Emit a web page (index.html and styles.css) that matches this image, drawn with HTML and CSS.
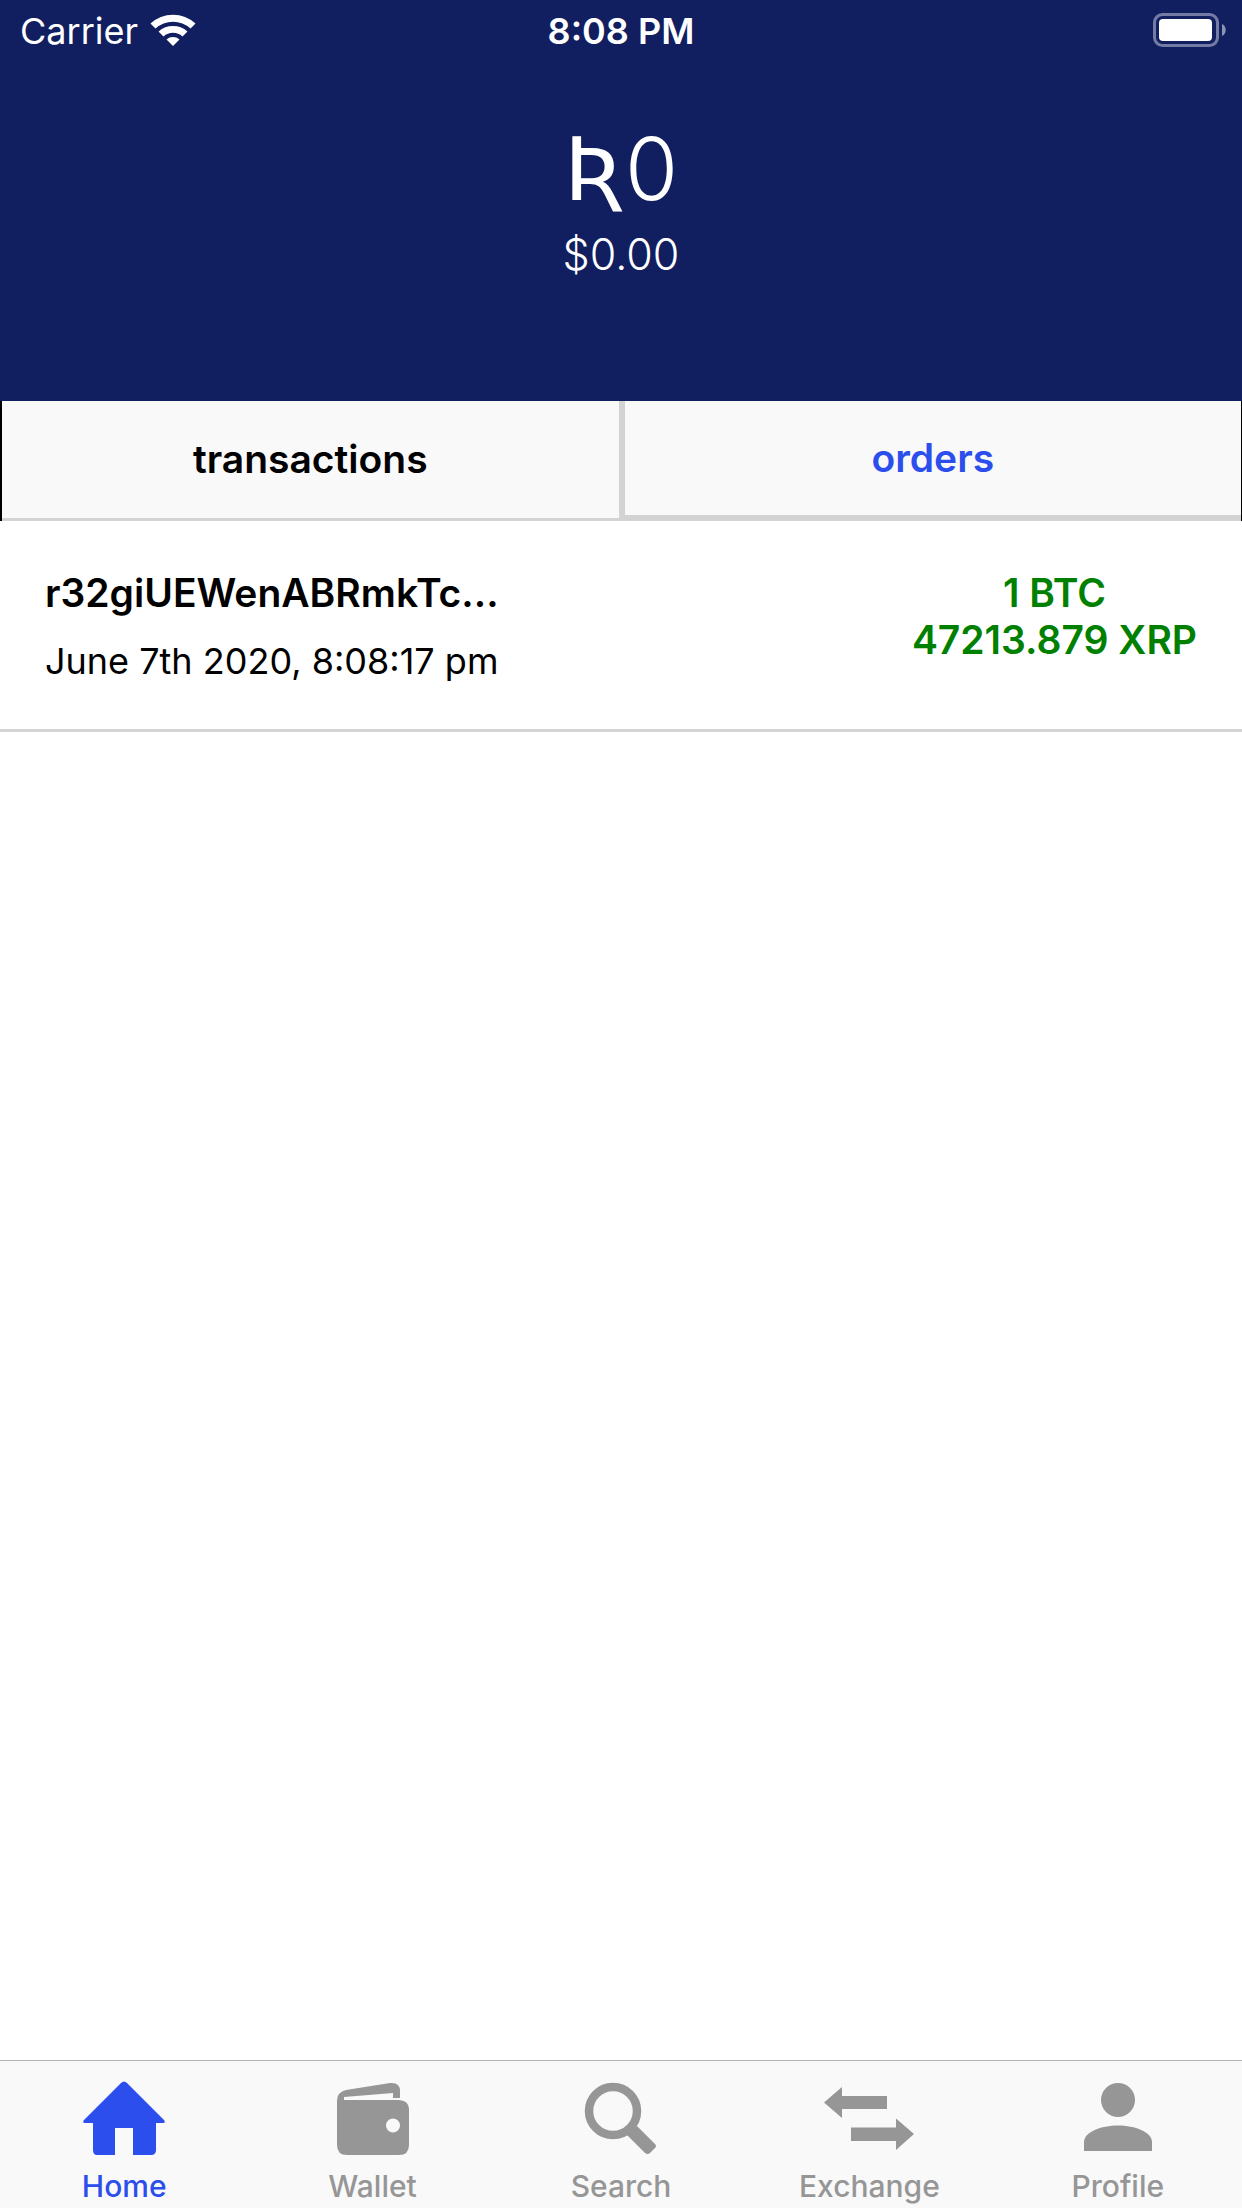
FILE: index.html
```html
<!DOCTYPE html>
<html lang="en">
<head>
<meta charset="utf-8">
<meta name="viewport" content="width=device-width, initial-scale=1">
<title>Wallet home</title>
<link rel="stylesheet" href="styles.css">
</head>
<body>
<div class="app">
  <header class="header">
    <div class="status">
      <div class="status-left">
        <span class="status-text">Carrier</span>
        <svg class="wifi" viewBox="0 0 46 34" aria-hidden="true">
          <path d="M0.500 10.500a33 33 0 0 1 45 0l-5 5a26 26 0 0 0-35 0z"/>
          <path d="M8.500 18.500a22 22 0 0 1 29 0l-5 5a14 14 0 0 0-19 0z"/>
          <path d="M16.500 26.500a10 10 0 0 1 13 0l-6.500 6.500z"/>
        </svg>
      </div>
      <time class="status-text clock">8:08 PM</time>
      <svg class="battery" viewBox="0 0 73 34" aria-hidden="true">
        <rect x="1.500" y="1.500" width="63" height="31" rx="8" fill="none" stroke="#747ba5" stroke-width="3"/>
        <rect x="6" y="6" width="53" height="22" rx="4"/>
        <path d="M69 11c5 2 5 10 0 12z" fill="#8d93b5"/>
      </svg>
    </div>
    <h1 class="balance"><span class="currency">Ʀ</span>0</h1>
    <p class="fiat">$0.00</p>
  </header>
  <nav class="tabs">
    <button type="button" class="tab tab-active">transactions</button>
    <button type="button" class="tab tab-idle">orders</button>
  </nav>
  <main class="list">
    <article class="entry">
      <div>
        <h2 class="address">r32giUEWenABRmkTc...</h2>
        <p class="date">June 7th 2020, 8:08:17 pm</p>
      </div>
      <p class="amount">1 BTC<br>47213.879 XRP</p>
    </article>
  </main>
  <nav class="bottom-bar">
    <a href="#home" class="link link-current">
      <svg class="icon" viewBox="0 0 90 76" aria-hidden="true"><path d="M42 3q3-3 6 0l37 37q2 3-1 3h-7v27q0 5-5 5H54V48H36v27H18q-4 0-4-5V43H6q-3 0-1-3z"/></svg>
      Home
    </a>
    <a href="#wallet" class="link">
      <svg class="icon" viewBox="0 0 90 76" aria-hidden="true"><path fill-rule="evenodd" d="M9 21q0-9 9-11l44-7q10-1 10 8v7h-7v-5l-49 4v3h54q11 0 11 10v35q0 10-10 10H19q-10 0-10-10zM72 45.500a7 7 0 1 0-14 0a7 7 0 1 0 14 0z"/></svg>
      Wallet
    </a>
    <a href="#search" class="link">
      <svg class="icon" viewBox="0 0 90 76" aria-hidden="true"><circle cx="37" cy="31" r="24" fill="none" stroke="currentColor" stroke-width="8.500"/><path d="M51 55l10-9 18 18q2 2 0 4l-5 5q-2 2-5 0z"/></svg>
      Search
    </a>
    <a href="#exchange" class="link">
      <svg class="icon" viewBox="0 0 90 76" aria-hidden="true"><path d="M0 22.500L18 7v9h45v13H18v9zM90 54L72 38.500v9H27V61h45v9z"/></svg>
      Exchange
    </a>
    <a href="#profile" class="link">
      <svg class="icon" viewBox="0 0 90 76" aria-hidden="true"><circle cx="45" cy="20" r="17"/><path d="M11 71v-9c0-10 17-16.500 34-16.500S79 52 79 62v9z"/></svg>
      Profile
    </a>
  </nav>
</div>
</body>
</html>
```

FILE: styles.css
```css
* { box-sizing: border-box; margin: 0; padding: 0; }

body {
  font-family: Inter, "Liberation Sans", sans-serif;
  font-size: 36px;
  color: #000;
  background: #fff;
}

.app { min-height: 100vh; display: flex; flex-direction: column; }

.header {
  background: #111e5f;
  color: #fff;
  text-align: center;
  padding-bottom: 119px;
}

.status {
  display: grid;
  grid-template-columns: 1fr auto 1fr;
  align-items: center;
  height: 60px;
  padding: 0 16px;
}
.status svg { fill: #fff; }
.status-left { display: flex; align-items: center; gap: 12px; padding-left: 4px; }
.status-text { padding-top: 2px; }
.wifi { width: 46px; height: 34px; }
.clock { font-weight: 600; }
.battery { width: 73px; height: 34px; justify-self: end; }

.balance {
  font-size: 86px;
  font-weight: 300;
  line-height: 114px;
  padding-top: 52px;
}
.currency { font-family: "DejaVu Sans", sans-serif; font-size: 88px; font-weight: 400; line-height: 1; }
.fiat {
  font-size: 43px;
  font-weight: 300;
  line-height: 56px;
}

.tabs { display: grid; grid-template-columns: 1fr 1fr; height: 120px; border: solid #000; border-width: 0 1px 0 2px; }
.tab {
  font: inherit;
  font-size: 39px;
  font-weight: 600;
  background: #f9f9f9;
  border: 0 solid #d3d3d3;
  padding-bottom: 2px;
}
.tab-active { color: #000; border-width: 0 3px 3px 0; }
.tab-idle { color: #2b4eed; border-width: 0 0 6px 3px; }

.list { flex: 1; }
.entry {
  display: flex;
  justify-content: space-between;
  padding: 48px 45px 46px;
  border-bottom: 3px solid #d3d3d3;
}
.address, .amount { font-size: 39px; font-weight: 600; line-height: 47px; }
.date { line-height: 44px; margin-top: 23px; }
.amount { color: #008000; text-align: center; }

.bottom-bar {
  display: grid;
  grid-template-columns: repeat(5, 1fr);
  height: 148px;
  padding-top: 19px;
  border-top: 1px solid #b2b2b2;
  background: #f9f9f9;
}
.link {
  display: flex;
  flex-direction: column;
  align-items: center;
  gap: 12px;
  font-size: 30px;
  font-weight: 500;
  line-height: 36px;
  color: #969696;
  text-decoration: none;
}
.link-current { color: #2b4eed; }
.icon { width: 90px; height: 76px; fill: currentColor; }
```
